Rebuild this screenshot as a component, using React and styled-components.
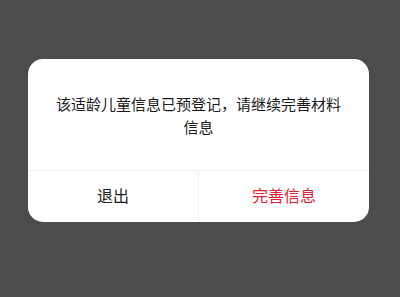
import React from "react";
import styled, { createGlobalStyle } from "styled-components";

const GlobalStyle = createGlobalStyle`
  html, body {
    margin: 0;
    padding: 0;
    background: #4c4c4c;
  }
  body {
    font-family: "Noto Sans CJK SC", "Noto Sans", sans-serif;
  }
`;

const Overlay = styled.section`
  display: flex;
  justify-content: flex-start;
  align-items: flex-start;
  width: 400px;
  height: 297px;
  padding: 59px 0 0 28px;
  box-sizing: border-box;
  background-color: #4c4c4c;
`;

const Dialog = styled.div`
  width: 341px;
  background: #ffffff;
  border-radius: 15px;
  overflow: hidden;
  display: flex;
  flex-direction: column;
`;

const Message = styled.div`
  height: 111px;
  padding: 0 24px;
  display: flex;
  align-items: center;
  justify-content: center;
  text-align: center;
  font-size: 15px;
  line-height: 23px;
  color: #1a1a1a;
`;

const Actions = styled.div`
  display: flex;
  height: 51px;
  border-top: 1px solid #f0f0f0;
`;

const Action = styled.button`
  flex: 1;
  border: none;
  background: transparent;
  font-family: inherit;
  font-size: 16px;
  color: ${(p) => (p.$primary ? "#e02433" : "#222222")};
  border-left: ${(p) => (p.$primary ? "1px solid #f0f0f0" : "none")};
  padding: 0 0 3px;
  cursor: pointer;
`;

function App() {
  return (
    <>
      <GlobalStyle />
      <Overlay>
        <Dialog>
          <Message>该适龄儿童信息已预登记，请继续完善材料信息</Message>
          <Actions>
            <Action>退出</Action>
            <Action $primary>完善信息</Action>
          </Actions>
        </Dialog>
      </Overlay>
    </>
  );
}

export default App;
